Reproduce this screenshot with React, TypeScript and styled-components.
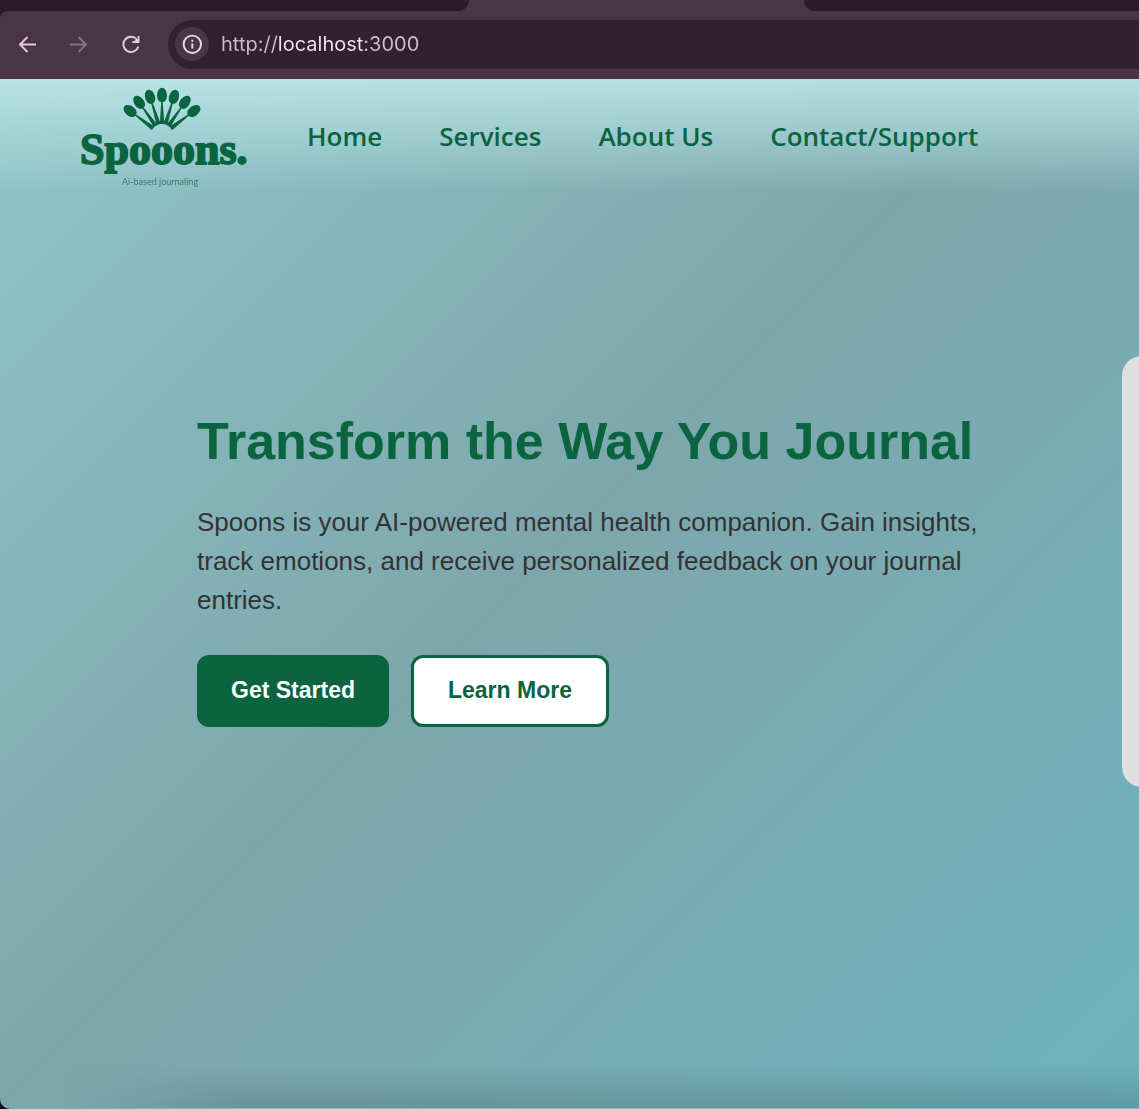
import React from 'react';
import styled, { createGlobalStyle } from 'styled-components';

const GlobalStyle = createGlobalStyle`
  *, *::before, *::after { box-sizing: border-box; }
  body { margin: 0; background: #0b0f1c; font-family: "Liberation Sans", Arial, sans-serif; }
`;

const green = '#0a6440';

const Window = styled.div`
  display: flex;
  flex-direction: column;
  min-height: 100vh;
  overflow: hidden;
`;

const TabStrip = styled.div`
  display: flex;
  justify-content: space-between;
  height: 11px;
  background: #4a3546;
`;

const InactiveTabs = styled.div<{ $side: 'left' | 'right' }>`
  flex: ${p => (p.$side === 'left' ? '0 0 469px' : '0 0 calc(100% - 804px)')};
  background: #2b1a29;
  border-radius: ${p => (p.$side === 'left' ? '0 0 16px 0' : '0 0 0 16px')};
`;

const ToolbarBack = styled.div`
  background: #2b1a29;
`;

const Toolbar = styled.div`
  display: flex;
  align-items: center;
  height: 68px;
  padding: 0 0 2px 10px;
  border-top-left-radius: 8px;
  background: #4a3546;
`;

const ToolButton = styled.button<{ $dim?: boolean }>`
  display: flex;
  align-items: center;
  justify-content: center;
  width: 34px;
  height: 34px;
  margin-right: 18px;
  padding: 0;
  border: 0;
  border-radius: 50%;
  background: none;
  color: ${p => (p.$dim ? '#8a7086' : '#e6c8e0')};
`;

const AddressBar = styled.form`
  display: flex;
  align-items: center;
  flex: 1;
  height: 49px;
  margin-left: 2px;
  padding-left: 7px;
  border-radius: 25px 0 0 25px;
  background: #32202f;
`;

const InfoButton = styled(ToolButton)`
  margin-right: 12px;
  background: #4a3546;
  color: #eadde8;
`;

const AddressInput = styled.input`
  flex: 1;
  min-width: 0;
  height: 32px;
  padding: 0;
  border: 0;
  outline: 0;
  background: linear-gradient(90deg, #cdbfca 57px, #f3e6f1 57px, #f3e6f1 143px, #cdbfca 143px);
  -webkit-background-clip: text;
  background-clip: text;
  color: transparent;
  font: 400 20px "Inter", sans-serif;
`;

const Page = styled.div`
  position: relative;
  flex: 1;
  display: flex;
  flex-direction: column;
  overflow: hidden;
  border-bottom-left-radius: 10px;
  background: linear-gradient(135deg, #91c6ca 0%, #85b5ba 25%, #7da7ad 47%, #79abb2 66%, #6db2be 100%);
`;

const BottomShade = styled.div`
  position: absolute;
  inset: auto 0 0 0;
  height: 44px;
  border-bottom: 1px solid #8dbcc2;
  background: linear-gradient(180deg, rgba(70, 100, 105, 0), rgba(70, 100, 105, 0.32));
  mask-image: linear-gradient(90deg, transparent 60px, #000 240px);
`;

const Header = styled.header`
  display: flex;
  align-items: center;
  gap: 59px;
  height: 114px;
  padding: 0 80px;
  background: linear-gradient(180deg, rgba(186, 230, 232, 0.9) 0%, rgba(178, 222, 226, 0.55) 50%, rgba(160, 205, 210, 0) 100%);
`;

const LogoLink = styled.a`
  display: flex;
  flex: none;
  width: 168px;
`;

const Nav = styled.nav`
  display: flex;
  gap: 57px;
`;

const NavLink = styled.a`
  color: ${green};
  font: 600 26px/36px "Open Sans", sans-serif;
  text-decoration: none;
  white-space: nowrap;
`;

const Hero = styled.main`
  display: flex;
  align-items: center;
  gap: 122px;
  padding: 163px 0 0 197px;
`;

const Intro = styled.section`
  flex: 0 0 803px;
  padding-bottom: 6px;
`;

const Title = styled.h1`
  margin: 0 0 32px;
  color: ${green};
  font-size: 52px;
  line-height: 60px;
  white-space: nowrap;
`;

const Lead = styled.p`
  margin: 0 0 35px;
  color: #333;
  font-size: 26px;
  line-height: 39px;
`;

const Actions = styled.div`
  display: flex;
  gap: 22px;
`;

const ActionButton = styled.button<{ $outline?: boolean }>`
  height: 72px;
  padding: 0 ${p => (p.$outline ? 34 : 31)}px;
  border: 3px solid ${green};
  border-radius: 12px;
  background: ${p => (p.$outline ? '#fff' : green)};
  color: ${p => (p.$outline ? green : '#fff')};
  font: 700 23px "Liberation Sans", Arial, sans-serif;
`;

const Preview = styled.aside`
  flex: 0 0 640px;
  height: 431px;
  border-radius: 20px;
  background: #e0e0e0;
`;

const spoons = [-53, -35, -17.5, 0, 17.5, 35, 53];

const Logo = () => (
  <svg width="168" height="104" viewBox="0 0 168 104" fill={green} role="img" aria-label="Spooons">
    {spoons.map(a => (
      <g key={a} transform={`translate(82 51) rotate(${a})`}>
        <path d="M0-47.300C3-47.300 4.900-43.500 4.900-39.500C4.900-35.500 3-32.800 0-32.800C-3-32.800-4.900-35.500-4.900-39.500C-4.900-43.500-3-47.300 0-47.300Z" />
        <path d="M-.7-34H.7L2.200-11H-2.200Z" />
      </g>
    ))}
    <text x="0" y="80" fontFamily="'Liberation Serif', serif" fontWeight="700" fontSize="44" stroke={green} strokeWidth="1.800" strokeLinejoin="round">Spooons.</text>
    <text x="80" y="101" textAnchor="middle" fontFamily="Lato, sans-serif" fontSize="9" opacity="0.7">Ai-based journaling</text>
  </svg>
);

const Stroke = ({ children }: { children: React.ReactNode }) => (
  <svg width="24" height="24" viewBox="0 0 24 24" fill="none" stroke="currentColor" strokeWidth="1.900">{children}</svg>
);

export default function App() {
  return (
    <Window>
      <GlobalStyle />
      <TabStrip>
        <InactiveTabs $side="left" />
        <InactiveTabs $side="right" />
      </TabStrip>
      <ToolbarBack>
        <Toolbar>
          <ToolButton aria-label="Back"><Stroke><path d="M21 12.500H5M12.500 5L5 12.500L12.500 20" /></Stroke></ToolButton>
          <ToolButton aria-label="Forward" $dim><Stroke><path d="M3 12.500H19M11.500 5L19 12.500L11.500 20" /></Stroke></ToolButton>
          <ToolButton aria-label="Reload">
            <Stroke>
              <path d="M19.300 14.500A7.600 7.600 0 1 1 17.800 7.500L19 9" />
              <path d="M19.500 4V10H13.500M19.500 7V10H15.500Z" />
            </Stroke>
          </ToolButton>
          <AddressBar>
            <InfoButton type="button" aria-label="Site information">
              <Stroke><circle cx="12.300" cy="12.300" r="8.700" /><path d="M12.300 11.500V16.500M12.300 7.700V9.700" /></Stroke>
            </InfoButton>
            <AddressInput aria-label="Address" defaultValue="http://localhost:3000" />
          </AddressBar>
        </Toolbar>
      </ToolbarBack>
      <Page>
        <Header>
          <LogoLink href="#home"><Logo /></LogoLink>
          <Nav>
            <NavLink href="#home">Home</NavLink>
            <NavLink href="#services">Services</NavLink>
            <NavLink href="#about">About Us</NavLink>
            <NavLink href="#contact">Contact/Support</NavLink>
          </Nav>
        </Header>
        <Hero>
          <Intro>
            <Title>Transform the Way You Journal</Title>
            <Lead>
              Spoons is your AI-powered mental health companion. Gain insights, track emotions, and receive
              personalized feedback on your journal entries.
            </Lead>
            <Actions>
              <ActionButton>Get Started</ActionButton>
              <ActionButton $outline>Learn More</ActionButton>
            </Actions>
          </Intro>
          <Preview />
        </Hero>
        <BottomShade />
      </Page>
    </Window>
  );
}
